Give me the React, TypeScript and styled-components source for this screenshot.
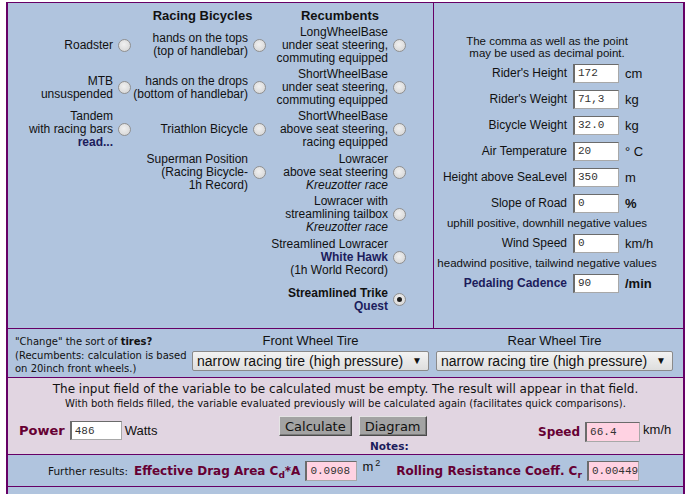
import React from "react";
import styled, { createGlobalStyle } from "styled-components";

const GlobalStyle = createGlobalStyle`
  html, body {
    margin: 0;
    padding: 0;
    background: #ffffff;
  }
  body {
    font-family: "Liberation Sans", Arial, sans-serif;
    color: #111;
  }
`;

const purple = "#660066";
const maroon = "#660033";
const navy = "#1c1c5c";

const Navy = styled.b`
  color: ${navy};
`;

type RadioItem = { col: number; row: number; lines: React.ReactNode[]; checked?: boolean };

const radios: RadioItem[] = [
  { col: 1, row: 2, lines: ["Roadster"] },
  { col: 1, row: 3, lines: ["MTB", "unsuspended"] },
  { col: 1, row: 4, lines: ["Tandem", "with racing bars", <Navy key="r">read...</Navy>] },
  { col: 2, row: 2, lines: ["hands on the tops", "(top of handlebar)"] },
  { col: 2, row: 3, lines: ["hands on the drops", "(bottom of handlebar)"] },
  { col: 2, row: 4, lines: ["Triathlon Bicycle"] },
  { col: 2, row: 5, lines: ["Superman Position", "(Racing Bicycle-", "1h Record)"] },
  { col: 3, row: 2, lines: ["LongWheelBase", "under seat steering,", "commuting equipped"] },
  { col: 3, row: 3, lines: ["ShortWheelBase", "under seat steering,", "commuting equipped"] },
  { col: 3, row: 4, lines: ["ShortWheelBase", "above seat steering,", "racing equipped"] },
  { col: 3, row: 5, lines: ["Lowracer", "above seat steering", <i key="k">Kreuzotter race</i>] },
  { col: 3, row: 6, lines: ["Lowracer with", "streamlining tailbox", <i key="k">Kreuzotter race</i>] },
  { col: 3, row: 7, lines: ["Streamlined Lowracer", <Navy key="w">White Hawk</Navy>, "(1h World Record)"] },
  { col: 3, row: 8, lines: [<b key="s">Streamlined Trike</b>, <Navy key="q">Quest</Navy>], checked: true },
];

type Field = { label: string; value: string; unit: string; boldUnit?: boolean; navy?: boolean };

const fields: (Field | string)[] = [
  { label: "Rider's Height", value: "172", unit: "cm" },
  { label: "Rider's Weight", value: "71,3", unit: "kg" },
  { label: "Bicycle Weight", value: "32.0", unit: "kg" },
  { label: "Air Temperature", value: "20", unit: "° C" },
  { label: "Height above SeaLevel", value: "350", unit: "m" },
  { label: "Slope of Road", value: "0", unit: "%", boldUnit: true },
  "uphill positive, downhill negative values",
  { label: "Wind Speed", value: "0", unit: "km/h" },
  "headwind positive, tailwind negative values",
  { label: "Pedaling Cadence", value: "90", unit: "/min", boldUnit: true, navy: true },
];

const tireOption = "narrow racing tire (high pressure)";

const App = () => {
  return (
    <>
      <GlobalStyle />
      <Frame>
        <TopSection>
          <BikePanel>
            <Heading $col={2}>Racing Bicycles</Heading>
            <Heading $col={3}>Recumbents</Heading>
            {radios.map((r, i) => (
              <RadioCell key={i} $col={r.col} $row={r.row}>
                <RadioText>
                  {r.lines.map((l, j) => (
                    <div key={j}>{l}</div>
                  ))}
                </RadioText>
                <Radio type="radio" name="bike" defaultChecked={r.checked} />
              </RadioCell>
            ))}
          </BikePanel>
          <InputPanel>
            <Comment>
              The comma as well as the point
              <br />
              may be used as decimal point.
            </Comment>
            <FieldGrid>
              {fields.map((f, i) =>
                typeof f === "string" ? (
                  <Hint key={i}>{f}</Hint>
                ) : (
                  <React.Fragment key={i}>
                    <FieldLabel $navy={f.navy}>{f.label}</FieldLabel>
                    <ValueInput defaultValue={f.value} />
                    <Unit $bold={f.boldUnit}>{f.unit}</Unit>
                  </React.Fragment>
                )
              )}
            </FieldGrid>
          </InputPanel>
        </TopSection>

        <TireSection>
          <TireNote>
            "Change" the sort of <b>tires?</b>
            <br />
            (Recumbents: calculation is based
            <br />
            on 20inch front wheels.)
          </TireNote>
          <TireColumn>
            <TireHeading>Front Wheel Tire</TireHeading>
            <SelectBox>
              <TireSelect defaultValue={tireOption}>
                <option>{tireOption}</option>
              </TireSelect>
              <Arrow>▼</Arrow>
            </SelectBox>
          </TireColumn>
          <TireColumn>
            <TireHeading>Rear Wheel Tire</TireHeading>
            <SelectBox>
              <TireSelect defaultValue={tireOption}>
                <option>{tireOption}</option>
              </TireSelect>
              <Arrow>▼</Arrow>
            </SelectBox>
          </TireColumn>
        </TireSection>

        <CalcSection>
          <CalcInfo>
            The input field of the variable to be calculated must be empty. The result will appear in that field.
          </CalcInfo>
          <CalcSub>
            With both fields filled, the variable evaluated previously will be calculated again (facilitates quick comparisons).
          </CalcSub>
          <CalcRow>
            <PowerGroup>
              <ResultLabel>Power</ResultLabel>
              <ValueInput defaultValue="486" $w={52} />
              <PlainUnit>Watts</PlainUnit>
            </PowerGroup>
            <ButtonGroup>
              <Buttons>
                <CalcButton>Calculate</CalcButton>
                <CalcButton>Diagram</CalcButton>
              </Buttons>
              <Notes>Notes:</Notes>
            </ButtonGroup>
            <SpeedGroup>
              <ResultLabel $size={12}>Speed</ResultLabel>
              <ValueInput defaultValue="66.4" $w={55} $h={20} $pink />
              <TopUnit>km/h</TopUnit>
            </SpeedGroup>
          </CalcRow>
        </CalcSection>

        <FurtherSection>
          <FurtherLabel>Further results:</FurtherLabel>
          <ResultLabel $size={12}>
            Effective Drag Area C<sub>d</sub>*A
          </ResultLabel>
          <ValueInput defaultValue="0.0908" $w={52} $h={20} $pink />
          <SupUnit>
            m<sup>2</sup>
          </SupUnit>
          <ResultLabel $size={12} $gap={16}>
            Rolling Resistance Coeff. C<sub>r</sub>
          </ResultLabel>
          <ValueInput defaultValue="0.00449" $w={52} $h={20} $pink />
        </FurtherSection>
        <Tail />
      </Frame>
    </>
  );
};

const Frame = styled.div`
  margin: 2px 0 0 6px;
  width: 679px;
  box-sizing: border-box;
  border-top: 1px solid ${purple};
  border-left: 2px solid ${purple};
  border-right: 2px solid ${purple};
  background: #b0c4de;
`;

const TopSection = styled.div`
  display: flex;
  height: 325px;
  border-bottom: 1px solid ${purple};
`;

const BikePanel = styled.div`
  width: 425px;
  border-right: 1px solid ${purple};
  display: grid;
  grid-template-columns: 127px 135px 140px;
  grid-template-rows: 21px repeat(7, 42.4px);
  font-size: 12px;
  line-height: 13px;
`;

const Heading = styled.div<{ $col: number }>`
  grid-column: ${(p) => p.$col};
  grid-row: 1;
  align-self: end;
  text-align: center;
  font-weight: bold;
  font-size: 13px;
  line-height: 15px;
  margin-bottom: 1px;
`;

const RadioCell = styled.div<{ $col: number; $row: number }>`
  grid-column: ${(p) => p.$col};
  grid-row: ${(p) => p.$row};
  display: flex;
  justify-content: flex-end;
  align-items: center;
  gap: 5px;
  padding-right: 4px;
`;

const RadioText = styled.div`
  text-align: right;
  white-space: nowrap;
`;

const Radio = styled.input`
  appearance: none;
  margin: 0;
  flex: none;
  width: 13px;
  height: 13px;
  border-radius: 50%;
  border: 1px solid #909090;
  background: radial-gradient(circle at 45% 40%, #f0f0f0, #d2d2d2);
  box-sizing: border-box;
  position: relative;

  &:checked::after {
    content: "";
    position: absolute;
    left: 3px;
    top: 3px;
    width: 5px;
    height: 5px;
    border-radius: 50%;
    background: #1a1a1a;
  }
`;

const InputPanel = styled.div`
  flex: 1;
  padding: 32px 0 0 2px;
  font-size: 12px;
`;

const Comment = styled.div`
  width: 222px;
  text-align: center;
  font-size: 11.5px;
  line-height: 12px;
  height: 25px;
`;

const FieldGrid = styled.div`
  width: 222px;
  display: grid;
  grid-template-columns: 131px 46px 1fr;
  grid-template-rows: repeat(6, 26px) 14px 26px 14px 26px;
  column-gap: 6px;
  align-items: center;
`;

const FieldLabel = styled.div<{ $navy?: boolean }>`
  text-align: right;
  white-space: nowrap;
  color: ${(p) => (p.$navy ? navy : "#111")};
  font-weight: ${(p) => (p.$navy ? "bold" : "normal")};
`;

const Unit = styled.div<{ $bold?: boolean }>`
  font-size: 13px;
  font-weight: ${(p) => (p.$bold ? "bold" : "normal")};
  white-space: nowrap;
`;

const Hint = styled.div`
  grid-column: 1 / 4;
  text-align: center;
  white-space: nowrap;
  font-size: 11.5px;
`;

const ValueInput = styled.input<{ $w?: number; $h?: number; $pink?: boolean }>`
  width: ${(p) => p.$w ?? 46}px;
  height: ${(p) => p.$h ?? 19}px;
  box-sizing: border-box;
  margin: 0;
  padding: 0 0 0 3px;
  font-family: "Liberation Mono", "Courier New", monospace;
  font-size: 11px;
  color: #333;
  background: ${(p) => (p.$pink ? "#ffd2e2" : "#ffffff")};
  border: 1px solid #a8a8a8;
  border-top-color: #6b6b6b;
  border-left: 2px solid #6b6b6b;
  outline: none;
`;

const TireSection = styled.div`
  display: flex;
  height: 48px;
  border-bottom: 1px solid ${purple};
`;

const TireNote = styled.div`
  width: 177px;
  padding: 6px 0 0 7px;
  font-family: "DejaVu Sans", Verdana, sans-serif;
  font-size: 10px;
  line-height: 13.5px;
  white-space: nowrap;
`;

const TireColumn = styled.div`
  width: 237px;
  margin-right: 7px;
  padding-top: 4px;
`;

const TireHeading = styled.div`
  text-align: center;
  font-size: 13px;
  line-height: 15px;
  margin-bottom: 3px;
`;

const SelectBox = styled.div`
  position: relative;
`;

const TireSelect = styled.select`
  appearance: none;
  width: 237px;
  height: 20px;
  margin: 0;
  padding: 0 0 0 4px;
  font-family: "Liberation Sans", Arial, sans-serif;
  font-size: 14px;
  color: #111;
  background: linear-gradient(#f3f3f3, #dedede);
  border: 1px solid #8a8a8a;
  border-radius: 2px;
`;

const Arrow = styled.span`
  position: absolute;
  right: 7px;
  top: 4px;
  font-size: 10px;
  pointer-events: none;
`;

const CalcSection = styled.div`
  height: 77px;
  background: #e1d5e1;
  border-bottom: 1px solid ${purple};
  padding-top: 3px;
  box-sizing: border-box;
  font-family: "DejaVu Sans", Verdana, sans-serif;
`;

const CalcInfo = styled.div`
  text-align: center;
  font-size: 12px;
  line-height: 16px;
  white-space: nowrap;
`;

const CalcSub = styled.div`
  text-align: center;
  font-size: 10px;
  line-height: 14px;
  white-space: nowrap;
`;

const CalcRow = styled.div`
  display: flex;
  align-items: flex-start;
  margin-top: 5px;
  padding-left: 11px;
`;

const PowerGroup = styled.div`
  width: 260px;
  display: flex;
  align-items: center;
  margin-top: 5px;
`;

const ResultLabel = styled.span<{ $gap?: number; $size?: number }>`
  font-family: "DejaVu Sans", Verdana, sans-serif;
  font-weight: bold;
  font-size: ${(p) => p.$size ?? 13}px;
  color: ${maroon};
  margin-right: 5px;
  margin-left: ${(p) => p.$gap ?? 0}px;
  white-space: nowrap;
  align-self: center;

  sub {
    font-size: 9px;
    vertical-align: -3px;
    line-height: 0;
  }
`;

const PlainUnit = styled.span`
  font-family: "Liberation Sans", Arial, sans-serif;
  font-size: 13px;
  margin-left: 3px;
`;

const ButtonGroup = styled.div`
  width: 259px;
  display: flex;
  flex-direction: column;
`;

const Buttons = styled.div`
  display: flex;
  gap: 7px;
`;

const CalcButton = styled.button`
  height: 20px;
  padding: 0 5px;
  font-family: "DejaVu Sans", Verdana, sans-serif;
  font-size: 13px;
  color: #111;
  background: #a3a3a3;
  border: 1px solid;
  border-color: #e4e4e4 #4a4a4a #4a4a4a #e4e4e4;
  box-shadow: inset -1px -1px 0 #7a7a7a;
`;

const Notes = styled.div`
  margin: 3px 0 0 91px;
  font-weight: bold;
  font-size: 10.5px;
  line-height: 14px;
  color: ${navy};
`;

const SpeedGroup = styled.div`
  display: flex;
  align-items: flex-start;
  margin-top: 6px;
`;

const TopUnit = styled.span`
  font-family: "Liberation Sans", Arial, sans-serif;
  font-size: 13px;
  margin-left: 3px;
  line-height: 15px;
`;

const SupUnit = styled.span`
  font-family: "Liberation Sans", Arial, sans-serif;
  font-size: 13px;
  margin: -8px 0 0 5px;

  sup {
    font-size: 9px;
    vertical-align: 5px;
    line-height: 0;
    margin-left: 2px;
  }
`;

const FurtherSection = styled.div`
  height: 31px;
  display: flex;
  align-items: center;
  padding-left: 40px;
  border-bottom: 1px solid ${purple};
  font-family: "DejaVu Sans", Verdana, sans-serif;
`;

const FurtherLabel = styled.span`
  font-size: 10.5px;
  margin-right: 6px;
`;

const Tail = styled.div`
  height: 8px;
`;

export default App;
